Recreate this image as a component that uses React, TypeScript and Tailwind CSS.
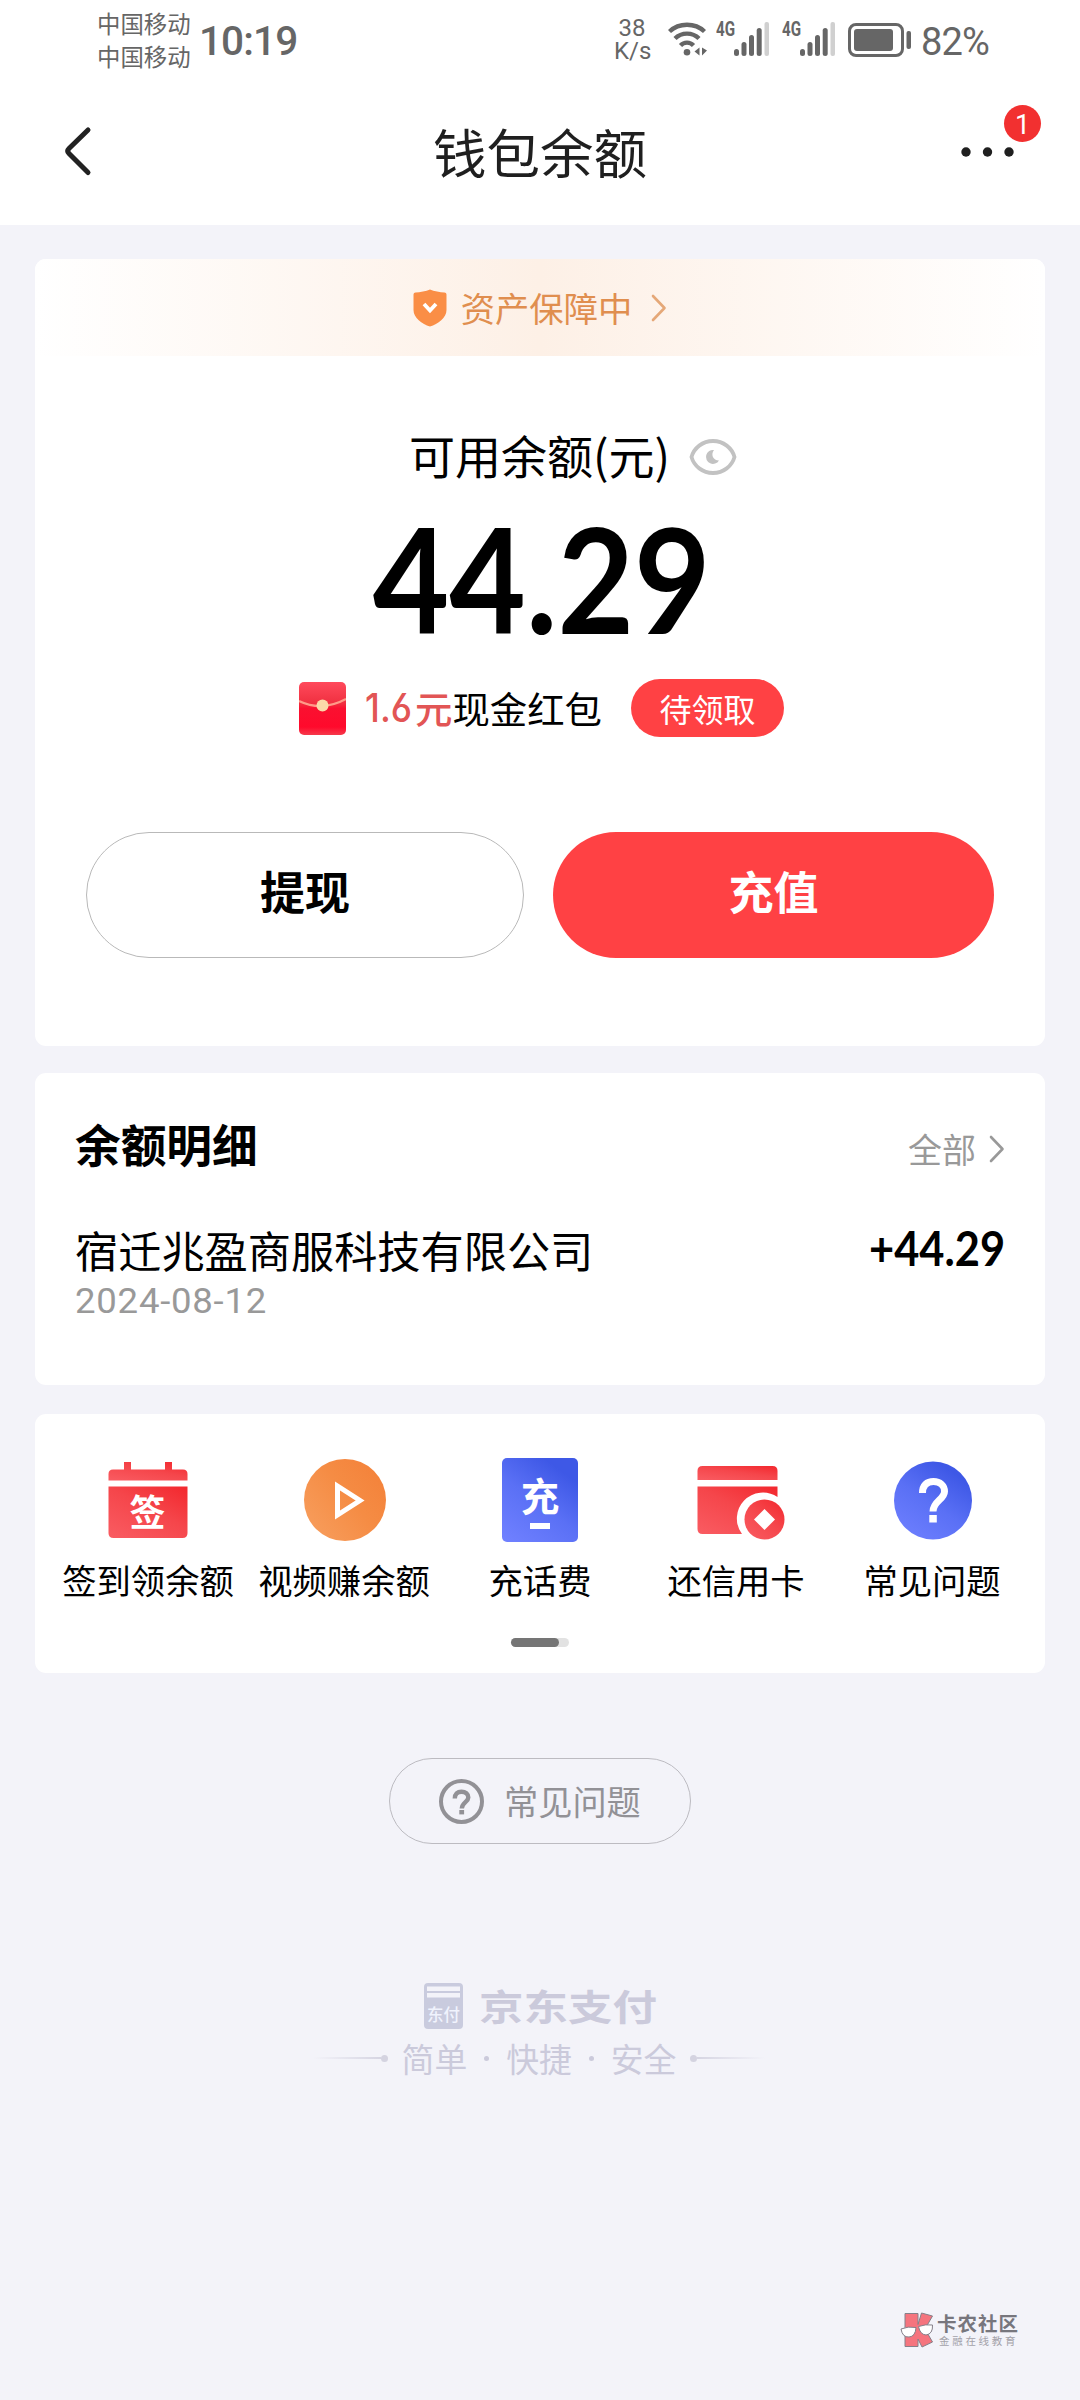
import type { ReactNode } from 'react'

interface Shortcut {
  label: string
  icon: ReactNode
}

interface BalanceRecord {
  id: string
  title: string
  date: string
  amount: string
}

const RECORDS: BalanceRecord[] = [
  { id: '1', title: '宿迁兆盈商服科技有限公司', date: '2024-08-12', amount: '+44.29' },
]

const SHORTCUTS: Shortcut[] = [
  { label: '签到领余额', icon: <CheckInIcon /> },
  { label: '视频赚余额', icon: <VideoIcon /> },
  { label: '充话费', icon: <TopUpIcon /> },
  { label: '还信用卡', icon: <CreditCardIcon /> },
  { label: '常见问题', icon: <HelpIcon /> },
]

function WifiIcon() {
  return (
    <svg width="40" height="34" viewBox="0 0 40 34" fill="none" stroke="#666" strokeWidth="4.4">
      <path d="M1.5 9.5C11 .5 27 .5 36.500 9.500" />
      <path d="M7 16.500C13.500 10 24.500 10 31 16.500" />
      <path d="M12.500 23.500C16 19.700 22 19.700 25.500 23.500" />
      <circle cx="19" cy="30.200" r="3.300" fill="#666" stroke="none" />
      <path d="M31.500 25.500v8l-5-4zM34 25.500v8l5-5z" fill="#666" stroke="none" />
    </svg>
  )
}

function SignalIcon() {
  return (
    <div className="flex items-start">
      <span className="w-[18px] origin-left scale-x-[0.76] font-[Roboto] text-[20px] leading-[14px] font-bold">
        4G
      </span>
      <svg width="36" height="34" viewBox="0 0 36 34" fill="#666">
        <rect x="0" y="27" width="5" height="7" rx="2.500" />
        <rect x="7.500" y="20" width="5" height="14" rx="2.500" />
        <rect x="15" y="13" width="5" height="21" rx="2.500" />
        <rect x="22.700" y="6" width="5" height="28" rx="2.500" />
        <rect x="30.500" y="0" width="4.500" height="34" rx="2" fill="#d0d0d0" />
      </svg>
    </div>
  )
}

function BatteryIcon() {
  return (
    <svg width="64" height="34" viewBox="0 0 64 34" fill="#666">
      <rect x="1.500" y="1.500" width="53" height="31" rx="6.500" fill="none" stroke="#666" strokeWidth="3" />
      <rect x="6" y="6" width="39" height="22" rx="3" />
      <rect x="58.500" y="8" width="4.500" height="18" rx="2" />
    </svg>
  )
}

function StatusBar() {
  return (
    <div className="flex h-[80px] pl-[97px] text-[#666]">
      <div className="mt-[7px] w-[102px] text-[23.400px] leading-[33px]">
        <div>中国移动</div>
        <div>中国移动</div>
      </div>
      <div className="mt-[20px] w-[415px] font-[Roboto] text-[40.500px] leading-[42px] font-medium tracking-[-0.900px]">10:19</div>
      <div className="mt-[17px] w-[36px] text-center font-[Roboto] text-[24px] leading-[23px]">
        <div>38</div>
        <div>K/s</div>
      </div>
      <div className="mt-[22px] ml-[18px]">
        <WifiIcon />
      </div>
      <div className="mt-[22px] ml-[8px]">
        <SignalIcon />
      </div>
      <div className="mt-[22px] ml-[12px]">
        <SignalIcon />
      </div>
      <div className="mt-[23px] ml-[12px]">
        <BatteryIcon />
      </div>
      <div className="mt-[21px] ml-[9px] font-[Roboto] text-[38px] leading-[42px] tracking-[-0.800px]">82%</div>
    </div>
  )
}

function NavBar() {
  return (
    <div className="flex h-[145px] items-start justify-between pr-[39px] pl-[62px]">
      <svg className="mt-[45px]" width="88" height="54" viewBox="0 0 88 54" fill="none" stroke="#222" strokeWidth="5" strokeLinecap="round" strokeLinejoin="round">
        <path d="M26 5 7 23.500Q4.500 26 7 28.500L26 47.500" />
      </svg>
      <h1 className="mt-[36px] text-[53.500px] leading-[70px] text-[#1f1f1f]">钱包余额</h1>
      <div className="relative mt-[25px] h-[60px] w-[111px]">
        <svg className="ml-[30px]" width="60" height="60" viewBox="0 0 60 60" fill="#1f1f1f">
          <circle cx="6" cy="47" r="4.700" />
          <circle cx="27.500" cy="47" r="4.700" />
          <circle cx="49" cy="47" r="4.700" />
        </svg>
        <span className="absolute top-0 right-0 flex h-[37px] w-[37px] items-center justify-center rounded-full bg-[#f23030] pt-[3px] font-[Roboto] text-[27px] leading-none text-white">
          1
        </span>
      </div>
    </div>
  )
}

function Chevron({ color }: { color: string }) {
  return (
    <svg width="16" height="28" viewBox="0 0 16 28" fill="none" stroke={color} strokeWidth="2.600" strokeLinecap="round" strokeLinejoin="round">
      <path d="m2 2 11.500 12L2 26" />
    </svg>
  )
}

function ShieldIcon() {
  return (
    <svg width="34" height="38" viewBox="0 0 34 38">
      <path d="M17 .5C21 2.200 27 3.200 31.500 3.500q2 .2 2 2V21C33.500 29 25 35 17 37.500 9 35 .5 29 .5 21V5.500q0-1.800 2-2C7 3.200 13 2.200 17 .5z" fill="#fa8e46" />
      <path d="m11 15 6 6.500 6-6.500" fill="none" stroke="#fff" strokeWidth="3.800" />
    </svg>
  )
}

function EyeIcon() {
  return (
    <svg width="48" height="36" viewBox="0 0 48 36" fill="none">
      <path d="M2.500 18C5 9 13.500 2 24 2s19 7 21.500 16C43 27 34.500 34 24 34S5 27 2.500 18z" stroke="#c2c2c2" strokeWidth="3.800" />
      <path d="M25 11A7 7 0 1 0 30 21.500C24 21.500 21.500 15.500 25 11z" fill="#c2c2c2" />
    </svg>
  )
}

function RedPacketIcon() {
  return (
    <svg width="47" height="53" viewBox="0 0 47 53">
      <defs>
        <linearGradient id="packet" x1="0" y1="0" x2="0" y2="1">
          <stop offset="0" stopColor="#ff4a5c" />
          <stop offset="0.400" stopColor="#f03040" />
          <stop offset="0.500" stopColor="#fa1030" />
          <stop offset="0.850" stopColor="#ff0a2c" />
          <stop offset="1" stopColor="#f53a4c" />
        </linearGradient>
      </defs>
      <rect width="47" height="53" rx="5" fill="url(#packet)" />
      <path d="M0 19Q23 30 47 17" fill="none" stroke="#ff9a88" strokeWidth="2.200" />
      <circle cx="23.500" cy="23.500" r="6" fill="#fbd9a8" />
    </svg>
  )
}

function BalanceCard() {
  return (
    <section className="flex h-[787px] flex-col overflow-hidden rounded-[11px] bg-white">
      <div className="flex h-[97px] items-center justify-center bg-linear-to-r from-white via-[#fdf0e6] to-white">
        <ShieldIcon />
        <span className="mt-[-2px] mr-[19px] ml-[14px] text-[34.300px] leading-[50px] text-[#e08e4f]">资产保障中</span>
        <Chevron color="#e5a878" />
      </div>
      <div className="mt-[65px] flex h-[66px] items-center pl-[374px]">
        <span className="w-[280px] text-[46px] leading-[66px] text-black">可用余额(元)</span>
        <div className="mt-[5px]">
          <EyeIcon />
        </div>
      </div>
      <div className="mt-[19px] flex h-[144px] justify-center pl-[3px]">
        <span className="origin-center scale-x-[0.905] font-[Lato] text-[146px] leading-[144px] font-bold text-black">
          44.29
        </span>
      </div>
      <div className="mt-[29px] flex h-[58px] items-center pl-[264px]">
        <RedPacketIcon />
        <div className="ml-[19px] flex w-[266px] items-center text-[37.400px] leading-[54px] whitespace-nowrap">
          <span className="w-[50px] origin-left scale-x-[0.920] font-[Inter] text-[39px] font-medium text-[#e25555] [font-feature-settings:'cv03']">1.6</span>
          <span className="font-medium text-[#e25555]">元</span>
          <span className="text-black">现金红包</span>
        </div>
        <button className="h-[58px] w-[153px] rounded-full bg-[#ff4144] text-[32px] leading-[55px] text-white">待领取</button>
      </div>
      <div className="mt-[95px] flex gap-[29px] px-[51px]">
        <button className="h-[126px] w-[438px] rounded-full border-[1.500px] border-[#b9b9b9] pb-[8px] text-[45px] leading-[66px] font-bold text-black">
          提现
        </button>
        <button className="h-[126px] flex-1 rounded-full bg-[#ff4144] pb-[8px] text-[45px] leading-[66px] font-bold text-white">
          充值
        </button>
      </div>
    </section>
  )
}

function RecordsCard() {
  return (
    <section className="mt-[27px] h-[312px] rounded-[11px] bg-white pt-[35px] pr-[40px] pl-[40px]">
      <div className="flex h-[70px] items-center justify-between">
        <h2 className="text-[45.700px] leading-[66px] font-bold text-black">余额明细</h2>
        <div className="mt-[11px] flex items-center gap-[13px]">
          <span className="text-[34px] leading-[50px] text-[#999]">全部</span>
          <Chevron color="#999" />
        </div>
      </div>
      {RECORDS.map((record) => (
        <div key={record.id} className="mt-[39px] flex justify-between">
          <div>
            <p className="text-[43.200px] leading-[64px] text-black">{record.title}</p>
            <p className="mt-[3px] w-fit origin-left scale-x-[1.060] font-[Roboto] text-[34.500px] leading-[34px] tracking-[0.700px] text-[#999]">
              {record.date}
            </p>
          </div>
          <span className="mt-[-2px] origin-right scale-x-[0.895] font-[Lato] text-[48.500px] leading-[64px] font-bold text-black">
            {record.amount}
          </span>
        </div>
      ))}
    </section>
  )
}

function CheckInIcon() {
  return (
    <svg width="80" height="86" viewBox="0 0 80 86">
      <defs>
        <linearGradient id="redFill" x1="0.100" y1="1" x2="0.900" y2="0">
          <stop offset="0" stopColor="#f95a60" />
          <stop offset="0.550" stopColor="#f5464b" />
          <stop offset="1" stopColor="#f32a30" />
        </linearGradient>
      </defs>
      <path d="M.5 23.500V17q0-4.500 4.500-4.500h11V5h7v7.500h34V5h7v7.500h11q4.500 0 4.500 4.500v6.500z" fill="url(#redFill)" />
      <path d="M.5 29.500h79V76q0 5-5 5h-69q-5 0-5-5z" fill="url(#redFill)" />
      <text x="39.500" y="69" textAnchor="middle" fontSize="36" fontWeight="700" fill="#fff">
        签
      </text>
    </svg>
  )
}

function VideoIcon() {
  return (
    <svg className="ml-[2px]" width="82" height="86" viewBox="0 0 82 86">
      <defs>
        <linearGradient id="orangeFill" x1="0" y1="1" x2="1" y2="0.200">
          <stop offset="0" stopColor="#f8a060" />
          <stop offset="0.600" stopColor="#f58c44" />
          <stop offset="1" stopColor="#f4823a" />
        </linearGradient>
      </defs>
      <circle cx="41" cy="43" r="41" fill="url(#orangeFill)" />
      <path d="M33.500 29v29L56 43.500z" fill="none" stroke="#fff" strokeWidth="5" />
    </svg>
  )
}

function TopUpIcon() {
  return (
    <svg width="76" height="86" viewBox="0 0 76 86">
      <defs>
        <linearGradient id="blueFill" x1="0.100" y1="1" x2="0.700" y2="0.100">
          <stop offset="0" stopColor="#6f80ff" />
          <stop offset="0.550" stopColor="#5a70f5" />
          <stop offset="1" stopColor="#3e58e6" />
        </linearGradient>
      </defs>
      <rect y="1" width="76" height="84" rx="5" fill="url(#blueFill)" />
      <text x="38" y="54" textAnchor="middle" fontSize="38.500" fontWeight="700" fill="#fff">
        充
      </text>
      <rect x="28" y="66" width="20" height="6" fill="#fff" />
    </svg>
  )
}

function CreditCardIcon() {
  return (
    <svg className="ml-[9px]" width="88" height="86" viewBox="0 0 88 86">
      <path d="M.5 23V14q0-5 5-5h70q5 0 5 5v9z" fill="url(#redFill)" />
      <path d="M.5 29.500h80V40A26 26 0 0 0 45 77H5.500q-5 0-5-5z" fill="url(#redFill)" />
      <circle cx="67.500" cy="62.500" r="25.500" fill="#fff" />
      <circle cx="67.500" cy="62.500" r="20" fill="url(#redFill)" />
      <path d="m67.500 52 10.500 10.500L67.500 73 57 62.500z" fill="#fff" />
    </svg>
  )
}

function HelpIcon() {
  return (
    <svg className="ml-[2px]" width="78" height="86" viewBox="0 0 78 86">
      <circle cx="39" cy="43.500" r="39" fill="url(#blueFill)" />
      <path d="M28.500 36C28.500 28 33 24.500 39.500 24.500S50.500 28.500 50.500 34.500c0 8-11.500 9.500-11.500 20" fill="none" stroke="#fff" strokeWidth="7" />
      <rect x="35.300" y="58" width="7.500" height="7.500" fill="#fff" />
    </svg>
  )
}

function ShortcutsCard() {
  return (
    <section className="mt-[29px] flex h-[259px] flex-col items-center rounded-[11px] bg-white pt-[43px]">
      <div className="grid w-[980px] grid-cols-5">
        {SHORTCUTS.map((item) => (
          <div key={item.label} className="flex flex-col items-center">
            {item.icon}
            <span className="mt-[11px] text-[34.300px] leading-[50px] whitespace-nowrap text-black">{item.label}</span>
          </div>
        ))}
      </div>
      <div className="mt-[34px] h-[9px] w-[58px] rounded-full bg-[#e2e2e2]">
        <div className="h-[9px] w-[48px] rounded-full bg-[#757575]" />
      </div>
    </section>
  )
}

function FaqButton() {
  return (
    <button className="mt-[85px] flex h-[86px] w-[302px] items-center self-center rounded-full border-[1.500px] border-[#bcbbc1] pl-[49px] text-[#929196]">
      <svg width="45" height="45" viewBox="0 0 45 45" fill="none" stroke="#929196">
        <circle cx="22.500" cy="22.500" r="20.500" strokeWidth="4" />
        <path d="M15.800 19.500C15.800 15 18.500 12.700 22.500 12.700s6.800 2.200 6.800 5.800c0 4.500-6.500 5-6.500 11" strokeWidth="4.400" />
        <rect x="20.300" y="31" width="4.800" height="4.400" fill="#929196" stroke="none" />
      </svg>
      <span className="mt-[-2px] ml-[20px] text-[34.200px] leading-[50px]">常见问题</span>
    </button>
  )
}

function PayFooter() {
  return (
    <footer className="mt-[138px] flex flex-col items-center text-[#cbcadb]">
      <div className="flex h-[48px] items-center">
        <svg width="39" height="46" viewBox="0 0 39 46">
          <rect width="39" height="46" rx="4" fill="#c9cbde" />
          <path d="M3 3.500h33v4.500H3zM3 10h33v4.500H3z" fill="#f3f3f9" />
          <text x="19.500" y="37.500" textAnchor="middle" fontSize="16.500" fontWeight="500" fill="#f0f3fd">
            东付
          </text>
        </svg>
        <span className="ml-[16px] w-[178px] origin-left scale-x-[1.220] text-[36.500px] leading-[48px] font-bold whitespace-nowrap">京东支付</span>
      </div>
      <div className="mt-[3px] mr-[2px] flex h-[50px] items-center text-[32.800px] leading-[50px]">
        <span className="h-[2px] w-[68px] bg-linear-to-r from-transparent to-[#d6d5e2]" />
        <span className="mr-[14px] h-[7px] w-[7px] rounded-full bg-[#d4d3e0]" />
        <span>简单</span>
        <span className="mx-[17px] h-[5px] w-[5px] rounded-full bg-[#cbcadb]" />
        <span>快捷</span>
        <span className="mx-[17px] h-[5px] w-[5px] rounded-full bg-[#cbcadb]" />
        <span>安全</span>
        <span className="ml-[14px] h-[7px] w-[7px] rounded-full bg-[#d4d3e0]" />
        <span className="h-[2px] w-[68px] bg-linear-to-l from-transparent to-[#d6d5e2]" />
      </div>
    </footer>
  )
}

function CommunityMark() {
  return (
    <div className="mt-auto mr-[61px] mb-[52px] flex items-center self-end">
      <svg width="34" height="36" viewBox="0 0 34 36" stroke="#85808a" strokeWidth="1">
        <path d="M5 1.500h13v11L21.500 1l11 3L25 17l7.500 13L22 35l-4-8v7.500H5z" fill="#f5747e" />
        <path d="M1 17q7-3 15-1.500-.5 9-7 9.500T1 17z" fill="#fff" />
        <path d="M18.500 14.500q7-2.500 14-1.500.5 9-6.500 10-6-.5-7.500-8.500z" fill="#fff" />
      </svg>
      <div className="ml-[3px]">
        <div className="text-[19.500px] leading-[22px] font-bold tracking-[1px] text-[#77767d]">卡农社区</div>
        <div className="ml-[2px] text-[10.500px] leading-[14px] tracking-[2.700px] text-[#a3a2a9]">金融在线教育</div>
      </div>
    </div>
  )
}

export default function App() {
  return (
    <div className="flex h-[2400px] w-[1080px] flex-col overflow-hidden bg-[#f3f3f9] font-['Noto_Sans_CJK_SC',sans-serif]">
      <header className="h-[225px] bg-white">
        <StatusBar />
        <NavBar />
      </header>
      <main className="mx-[35px] mt-[34px] flex flex-col">
        <BalanceCard />
        <RecordsCard />
        <ShortcutsCard />
        <FaqButton />
        <PayFooter />
      </main>
      <CommunityMark />
    </div>
  )
}
